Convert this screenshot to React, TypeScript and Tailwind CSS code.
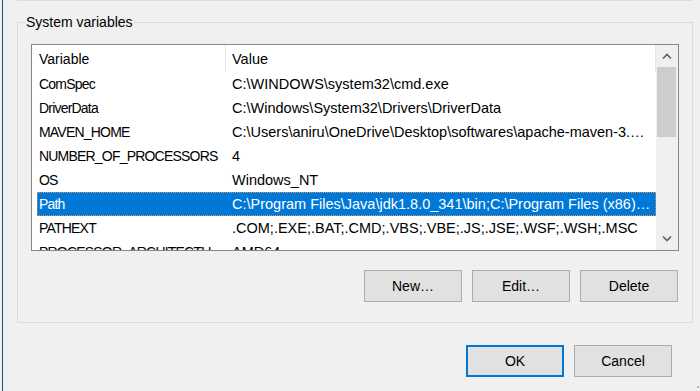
import React from 'react'

type Row = { name: string; value: string }

const rows: Row[] = [
  { name: 'ComSpec', value: 'C:\\WINDOWS\\system32\\cmd.exe' },
  { name: 'DriverData', value: 'C:\\Windows\\System32\\Drivers\\DriverData' },
  { name: 'MAVEN_HOME', value: 'C:\\Users\\aniru\\OneDrive\\Desktop\\softwares\\apache-maven-3.8.6-bin\\apache-maven-3.8.6' },
  { name: 'NUMBER_OF_PROCESSORS', value: '4' },
  { name: 'OS', value: 'Windows_NT' },
  { name: 'Path', value: 'C:\\Program Files\\Java\\jdk1.8.0_341\\bin;C:\\Program Files (x86)\\Common Files\\Oracle\\Java\\javapath' },
  { name: 'PATHEXT', value: '.COM;.EXE;.BAT;.CMD;.VBS;.VBE;.JS;.JSE;.WSF;.WSH;.MSC' },
  { name: 'PROCESSOR_ARCHITECTURE', value: 'AMD64' },
]

function Chevron({ down }: { down?: boolean }) {
  return (
    <svg width="10" height="6" viewBox="0 0 10 6" className={down ? 'rotate-180' : ''}>
      <polyline points="1,5.5 5,1.5 9,5.5" fill="none" stroke="#606060" strokeWidth="1.6" />
    </svg>
  )
}

function Button({ label, primary }: { label: string; primary?: boolean }) {
  return (
    <button
      className={
        'w-[98px] h-[32px] bg-[#e1e1e1] text-black text-[14px] flex items-center justify-center ' +
        (primary ? 'border-2 border-[#0078d7]' : 'border border-[#adadad]')
      }
    >
      {label}
    </button>
  )
}

export default function App() {
  return (
    <div className="w-[700px] h-[391px] bg-[#f0f0f0] flex overflow-hidden relative font-['Liberation_Sans',Arial,sans-serif] text-[14px] text-black">
      <div className="w-[2px]" />
      <div className="w-[1px] bg-[#2b4b6b]" />
      <div className="flex-1 flex flex-col">
        {/* bottom edge of the group above */}
        <div className="ml-[14px] w-[676px] h-[1px] bg-[#dcdcdc]" />

        <fieldset className="ml-[14px] mt-[11px] w-[676px] border border-[#dcdcdc] pb-[20px]">
          <legend className="ml-[7px] px-[1px] leading-[20px]">System variables</legend>

          <div className="ml-[13px] mt-[12px] w-[648px] h-[207px] border border-[#828790] bg-white flex">
            <div className="flex-1 flex flex-col overflow-hidden">
              <div className="h-[27px] flex shrink-0">
                <div className="w-[194px] pl-[7px] pt-[2px] border-r border-[#e5e5e5] flex items-center">Variable</div>
                <div className="flex-1 pl-[6px] pt-[2px] border-r border-[#e5e5e5] flex items-center text-[14.5px]">Value</div>
              </div>
              {rows.map((r) => {
                const selected = r.name === 'Path'
                return (
                  <div
                    key={r.name}
                    className={
                      'ml-[5px] h-[24px] shrink-0 flex items-center ' +
                      (selected ? 'bg-[#0078d7] text-white outline-1 outline-dotted -outline-offset-1 outline-[#d9925a]' : '')
                    }
                  >
                    <div className="w-[189px] pl-[2px] pt-[1px] truncate tracking-[-0.8px]">{r.name}</div>
                    <div className="flex-1 min-w-0 pl-[6px] pr-[5px] pt-[1px] truncate text-[14.5px]">{r.value}</div>
                  </div>
                )
              })}
            </div>

            <div className="w-[22px] bg-[#f0f0f0] flex flex-col">
              <div className="h-[22px] flex items-center justify-center">
                <Chevron />
              </div>
              <div className="ml-[1px] w-[19px] h-[70px] bg-[#cdcdcd]" />
              <div className="flex-1" />
              <div className="h-[22px] flex items-center justify-center">
                <Chevron down />
              </div>
            </div>
          </div>

          <div className="mt-[19px] mr-[14px] flex justify-end gap-[10px]">
            <Button label="New…" />
            <Button label="Edit…" />
            <Button label="Delete" />
          </div>
        </fieldset>

        <div className="mt-[22px] mr-[28px] flex justify-end gap-[10px]">
          <Button label="OK" primary />
          <Button label="Cancel" />
        </div>
      </div>

      {/* size grip */}
      <div className="absolute right-[1px] bottom-[3px] w-[2px] h-[2px] bg-[#b8b8b8]" />
    </div>
  )
}
